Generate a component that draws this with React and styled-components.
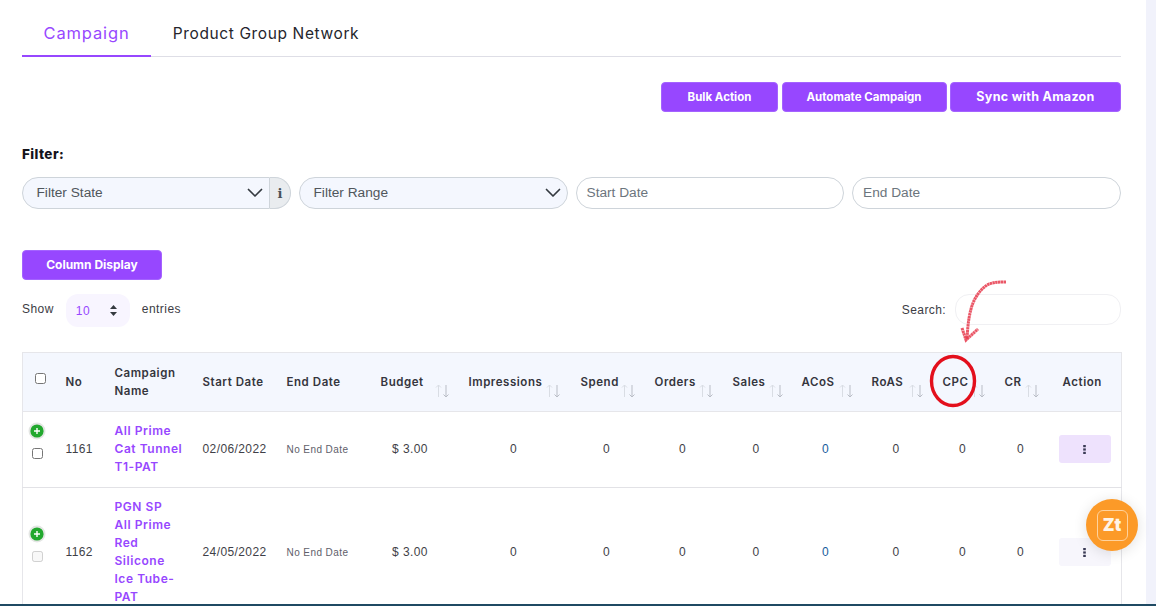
import React from "react";
import styled, { createGlobalStyle } from "styled-components";

const Global = createGlobalStyle`
  html, body { margin: 0; padding: 0; background: #fff; overflow: hidden; }
  * { box-sizing: border-box; }
  body { font-family: Inter, "Liberation Sans", sans-serif; }
`;
const Shell = styled.div`
  position: relative; width: 1156px; height: 606px; display: flex; flex-direction: column; overflow: hidden;
`;
const Body = styled.div`flex: 1; min-height: 0; display: flex; overflow: hidden;`;
const Page = styled.main`width: 1146px; padding: 0 25px 0 22px; flex: none;`;
const Rail = styled.div`flex: 1; background: #f1f2fb;`;
const BottomLine = styled.div`height: 2px; background: #1f4a63; flex: none;`;

const Tabs = styled.nav`display: flex; height: 57px; border-bottom: 1px solid #dedee6;`;
const Tab = styled.div`
  width: ${p => p.$w}px; height: 57px; display: flex; align-items: center; justify-content: center;
  padding-top: 10px; font: 400 ${p => p.$active ? 16.5 : 15.5}px Inter, sans-serif;
  letter-spacing: ${p => p.$active ? "0.85px" : "0.62px"};
  color: ${p => p.$active ? "#9747ff" : "#25252c"};
  border-bottom: ${p => p.$active ? "2px solid #9747ff" : "none"};
`;
const Actions = styled.div`display: flex; justify-content: flex-end; gap: 3.5px; margin-top: 25px;`;
const Button = styled.button`
  width: ${p => p.$w}px; height: 30px; border: 1px solid #a463ff; border-radius: 4px; background: #9747ff; color: #fff;
  font: 700 ${p => p.$size || 11.5}px Inter, sans-serif; padding: 0 0 1px;
  letter-spacing: ${p => p.$ls || 0}px;
`;
const FilterLabel = styled.div`margin-top: 32px; font: 800 13.5px/20px Inter, sans-serif; color: #14141c; letter-spacing: .4px;`;
const FilterRow = styled.div`display: grid; grid-template-columns: 269px 268.5px 268.5px 269px; gap: 8px; margin-top: 13px;`;
const Group = styled.div`display: flex; height: 32px;`;
const SelectBox = styled.div`
  flex: 1; height: 32px; display: flex; align-items: center; justify-content: space-between;
  padding: 0 6px 1px 13.5px; background: #f4f7fe; border: 1px solid #ced4da;
  border-radius: ${p => p.$joined ? "16px 0 0 16px" : "16px"};
  font: 400 13.7px "Liberation Sans", sans-serif; color: #50565c;
`;
const Addon = styled.div`
  width: 21px; display: flex; align-items: center; justify-content: center; background: #e9ecef;
  border: 1px solid #ced4da; border-left: 0; border-radius: 0 16px 16px 0; color: #495057;
  font: 700 13px "DejaVu Serif", serif;
`;
const DateBox = styled.div`
  height: 32px; display: flex; align-items: center; padding: 0 10px 1px; border: 1px solid #ced4da; border-radius: 16px;
  font: 400 13.7px "Liberation Sans", sans-serif; color: #6c757d;
`;
const ColumnRow = styled.div`margin-top: 41px;`;
const TableBar = styled.div`display: flex; justify-content: space-between; align-items: flex-start; margin-top: 14px;`;
const Entries = styled.div`display: flex; align-items: flex-start; font: 400 12px/30px "Liberation Sans", sans-serif; color: #3c3c44; letter-spacing: .45px;`;
const PageSize = styled.div`
  width: 64px; height: 33px; margin: 0 12px; padding: 0 13px 0 10px; display: flex; align-items: center; justify-content: space-between;
  background: #f8f5ff; border-radius: 12px; color: #9747ff; font: 400 12px "Liberation Sans", sans-serif;
`;
const SearchWrap = styled.div`display: flex; align-items: center; gap: 9px; font: 400 12px "Liberation Sans", sans-serif; color: #3c3c44; letter-spacing: .4px;`;
const SearchBox = styled.div`width: 166px; height: 31px; border: 1px solid #f0f0f3; border-radius: 14px;`;

const Table = styled.table`
  width: 1099px; margin-top: 25px; border-collapse: collapse; table-layout: fixed;
  border: 1px solid #e6e6ea; border-bottom: 0;
`;
const HeadRow = styled.tr`height: 59px; background: #f4f7fe; border-bottom: 1px solid #e6e6ea;`;
const Th = styled.th`
  position: relative; padding: ${p => p.$center ? "0 9px 1px 3px" : "0 4px 1px 9px"}; text-align: ${p => p.$center ? "center" : "left"};
  font: 600 11.5px/18px Inter, sans-serif; letter-spacing: .55px; color: #35353d; vertical-align: middle;
`;
const CheckHead = styled.th`padding: 0 0 7px 0; text-align: left;`;
const SortMark = styled.svg`position: absolute; right: ${p => p.$right || 9}px; top: 31px; width: 15px; height: 14px;`;
const Row = styled.tr`border-bottom: 1px solid #e2e2e6;`;
const Td = styled.td`
  padding: 10px ${p => p.$pr ?? 13}px 11px 9px; text-align: ${p => p.$left ? "left" : "center"};
  font: 400 12px/18px "Liberation Sans", sans-serif; color: ${p => p.$blue ? "#175c9c" : "#3f3f47"}; vertical-align: middle;
  letter-spacing: .4px;
`;
const CheckCell = styled.td`padding: 0; vertical-align: middle;`;
const CheckStack = styled.div`display: flex; flex-direction: column; align-items: center; gap: 8.5px; padding: 0 5px 18px 0;`;
const Plus = styled.svg`width: 18px; height: 18px; display: block;`;
const Check = styled.input.attrs({ type: "checkbox" })`margin: 0; width: 11px; height: 11px; display: block;`;
const HeadCheck = styled(Check)`margin-left: 12px;`;
const NameLink = styled.div`font: 600 12px/18px Inter, sans-serif; color: #9747ff; letter-spacing: .55px; text-align: left; white-space: nowrap;`;
const NoEnd = styled.span`font-size: 10px; color: #60606a; letter-spacing: .42px;`;
const Kebab = styled.div`
  width: 52px; height: 28px; display: flex; align-items: center; justify-content: center; border-radius: 3px;
  background: ${p => p.$faded ? "#f7f6fc" : "#eee2fd"};
`;
const Mark = styled.svg`position: absolute; left: 0; top: 0; pointer-events: none;`;
const Chat = styled.div`
  position: absolute; left: 1086px; top: 499px; width: 52px; height: 52px; border-radius: 50%; background: #fc9a28;
  box-shadow: 0 2px 14px rgba(0,0,0,.12); display: flex; align-items: center; justify-content: center;
`;
const ChatFrame = styled.div`
  width: 31px; height: 31px; border: 1px solid #ffd29c; border-radius: 6px; display: flex; align-items: center; justify-content: center;
  font: 900 17px/1 Inter, sans-serif; color: #fff4e6;
`;

const Chevron = () => (
  <svg width="16" height="10" viewBox="0 0 16 10"><path d="M1.5 1.5 8 8l6.5-6.5" fill="none" stroke="#343a40" strokeWidth="1.7" strokeLinecap="round" strokeLinejoin="round" /></svg>
);
const Stepper = () => (
  <svg width="7" height="11" viewBox="0 0 7 11"><path d="M3.5 0 7 4H0zM3.5 11 0 7h7z" fill="#343a40" /></svg>
);
const Sort = ({ right }) => (
  <SortMark $right={right} viewBox="0 0 15 14" fill="none" strokeWidth="1">
    <path d="M3.5 13V1M1 3.5 3.5 1 6 3.5" stroke="#d9dde4" />
    <path d="M11 1v12M8.5 10.5 11 13l2.5-2.5" stroke="#b9bdc6" />
  </SortMark>
);
const PlusIcon = () => (
  <Plus viewBox="0 0 18 18">
    <circle cx="9" cy="9" r="8.5" fill="#e4e6e4" />
    <circle cx="9" cy="9" r="6.6" fill="#22a82e" />
    <path d="M9 6v6M6 9h6" stroke="#fff" strokeWidth="1.4" />
  </Plus>
);
const Dots = () => (
  <svg width="3" height="9" viewBox="0 0 3 9" fill="#3a3a55"><rect x=".2" width="2.6" height="2.2" /><rect x=".2" y="3.4" width="2.6" height="2.2" /><rect x=".2" y="6.8" width="2.6" height="2.2" /></svg>
);

const widths = [34, 49, 88, 84, 94, 88, 112, 74, 78, 69, 70, 71, 62, 54, 72];
const heads = [
  ["No"], ["Campaign Name"], ["Start Date"], ["End Date"], ["Budget", 10], ["Impressions", 11], ["Spend", 10],
  ["Orders", 10], ["Sales", 9], ["ACoS", 9], ["RoAS", 10], ["CPC", 10], ["CR", 10],
];
const rows = [
  { no: 1161, name: ["All Prime", "Cat Tunnel", "T1-PAT"], date: "02/06/2022" },
  { no: 1162, name: ["PGN SP", "All Prime", "Red", "Silicone", "Ice Tube-", "PAT"], date: "24/05/2022", faded: true },
];

export default function App() {
  return (
    <Shell>
      <Global />
      <Body>
        <Page>
          <Tabs>
            <Tab $w={129} $active>Campaign</Tab>
            <Tab $w={230}>Product Group Network</Tab>
          </Tabs>
          <Actions>
            <Button $w={117}>Bulk Action</Button>
            <Button $w={165}>Automate Campaign</Button>
            <Button $w={171} $size={12.5} $ls={.3}>Sync with Amazon</Button>
          </Actions>
          <FilterLabel>Filter:</FilterLabel>
          <FilterRow>
            <Group>
              <SelectBox $joined>Filter State<Chevron /></SelectBox>
              <Addon>i</Addon>
            </Group>
            <Group><SelectBox>Filter Range<Chevron /></SelectBox></Group>
            <DateBox>Start Date</DateBox>
            <DateBox>End Date</DateBox>
          </FilterRow>
          <ColumnRow><Button $w={140} $size={12}>Column Display</Button></ColumnRow>
          <TableBar>
            <Entries>Show<PageSize>10<Stepper /></PageSize>entries</Entries>
            <SearchWrap>Search:<SearchBox /></SearchWrap>
          </TableBar>
          <Table>
            <colgroup>{widths.map((w, i) => <col key={i} style={{ width: w }} />)}</colgroup>
            <thead>
              <HeadRow>
                <CheckHead><HeadCheck /></CheckHead>
                {heads.map(([t, r]) => <Th key={t}>{t}{r && <Sort right={r} />}</Th>)}
                <Th $center>Action</Th>
              </HeadRow>
            </thead>
            <tbody>
              {rows.map(r => (
                <Row key={r.no}>
                  <CheckCell>
                    <CheckStack><PlusIcon /><Check disabled={r.faded} /></CheckStack>
                  </CheckCell>
                  <Td $left>{r.no}</Td>
                  <Td $left $pr={0}><NameLink>{r.name.map(n => <div key={n}>{n}</div>)}</NameLink></Td>
                  <Td $left $pr={0}>{r.date}</Td>
                  <Td $left $pr={0}><NoEnd>No End Date</NoEnd></Td>
                  <Td $pr={20}>$ 3.00</Td>
                  {[0, 1, 2, 3, 4, 5, 6, 7].map(i => <Td key={i} $blue={i === 4}>0</Td>)}
                  <Td $pr={0}><Kebab $faded={r.faded}><Dots /></Kebab></Td>
                </Row>
              ))}
            </tbody>
          </Table>
        </Page>
        <Rail />
      </Body>
      <BottomLine />
      <Mark width="1156" height="606" viewBox="0 0 1156 606" fill="none">
        <ellipse cx="953" cy="381" rx="21.5" ry="24.5" stroke="#e30f1c" strokeWidth="3.4" />
        <path d="M1006 282c-7 0-13 0-19 3-7 5-11 11-14 18-3 8-5 17-6 36" stroke="#e63a4c" strokeWidth="3" strokeDasharray="2.4 .4" opacity=".85" />
        <path d="M962 328l4 12 12-11" stroke="#e63a4c" strokeWidth="3" strokeDasharray="2.4 .4" opacity=".85" />
      </Mark>
      <Chat><ChatFrame>Zt</ChatFrame></Chat>
    </Shell>
  );
}
